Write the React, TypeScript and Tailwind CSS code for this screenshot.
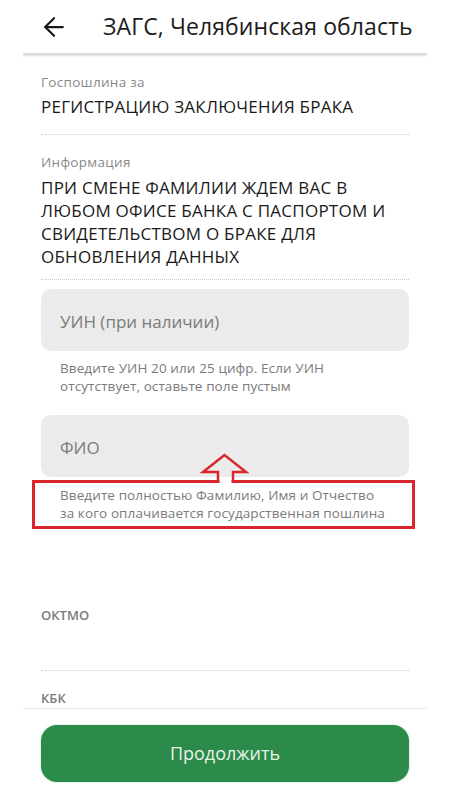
import { ArrowLeft } from "lucide-react";

const font = { fontFamily: '"Open Sans", "Noto Sans", sans-serif' };

function Label({ children }: { children: string }) {
  return <p className="text-[13.5px] leading-[18px] tracking-[0.3px] text-[#8a8a8a]">{children}</p>;
}

function Dotted({ className = "" }: { className?: string }) {
  return <div className={`border-t border-dotted border-[#c9c9c9] ${className}`} />;
}

function Field({ placeholder, className = "" }: { placeholder: string; className?: string }) {
  return (
    <div className={`h-[62px] rounded-[10px] bg-[#ebebeb] flex items-center pl-[19px] pt-[4px] ${className}`}>
      <span className="text-[17px] text-[#7b7b7b]">{placeholder}</span>
    </div>
  );
}

export default function App() {
  return (
    <div className="relative w-[450px] h-[800px] bg-white flex flex-col overflow-hidden" style={font}>
      <header className="h-[53px] flex items-center pl-[39px] shrink-0">
        <ArrowLeft size={30} strokeWidth={1.8} className="text-[#1a1a1a]" />
        <h1 className="ml-[34px] text-[23px] text-[#1c1c1c] tracking-[0.1px]">ЗАГС, Челябинская область</h1>
      </header>
      <div className="mx-[23px] h-[2px] bg-[#dcdcdc] shadow-[0_1px_2px_rgba(0,0,0,0.12)] shrink-0" />

      <main className="flex-1 overflow-hidden px-[41px] pt-[18px]">
        <Label>Госпошлина за</Label>
        <p className="mt-[4px] text-[17px] leading-[23px] tracking-[0.25px] text-[#1a1a1a] font-medium">
          РЕГИСТРАЦИЮ ЗАКЛЮЧЕНИЯ БРАКА
        </p>
        <Dotted className="mt-[16px]" />

        <div className="mt-[18px]">
          <Label>Информация</Label>
        </div>
        <p className="mt-[5px] text-[17px] leading-[23px] tracking-[0.25px] text-[#1a1a1a] font-medium whitespace-nowrap">
          ПРИ СМЕНЕ ФАМИЛИИ ЖДЕМ ВАС В
          <br />
          ЛЮБОМ ОФИСЕ БАНКА С ПАСПОРТОМ И
          <br />
          СВИДЕТЕЛЬСТВОМ О БРАКЕ ДЛЯ
          <br />
          ОБНОВЛЕНИЯ ДАННЫХ
        </p>
        <Dotted className="mt-[11px]" />

        <Field placeholder="УИН (при наличии)" className="mt-[9px]" />
        <p className="mt-[8px] pl-[19px] text-[13.5px] leading-[18px] tracking-[0.1px] text-[#7b7b7b] font-medium">
          Введите УИН 20 или 25 цифр. Если УИН
          <br />
          отсутствует, оставьте поле пустым
        </p>

        <Field placeholder="ФИО" className="mt-[20px]" />
        <div className="mt-[3px] -ml-[9px] -mr-[6px] border-[3px] border-[#d9252b] pl-[25px] pt-[3px] pb-[4px]">
          <p className="text-[13.5px] leading-[18px] tracking-[0.1px] text-[#7b7b7b] font-medium whitespace-nowrap">
            Введите полностью Фамилию, Имя и Отчество
            <br />
            за кого оплачивается государственная пошлина
          </p>
        </div>

        <p className="mt-[77px] text-[13px] leading-[18px] text-[#7a7a7a] font-semibold">ОКТМО</p>
        <Dotted className="mt-[46px]" />
        <p className="mt-[18px] text-[13px] leading-[18px] text-[#7a7a7a] font-semibold">КБК</p>
      </main>

      <footer className="mx-[23px] border-t border-[#ececec] pt-[16px] pb-[18px] shrink-0">
        <button className="mx-[18px] w-[368px] h-[57px] rounded-[16px] bg-[#2c8a4b] text-[18px] text-[#e6f4e7] shadow-[0_0_2px_rgba(60,180,90,0.5)]">
          Продолжить
        </button>
      </footer>

      <svg
        className="absolute left-0 top-0 pointer-events-none"
        width={450}
        height={800}
        viewBox="0 0 450 800"
      >
        <rect x={219.5} y={478} width={12} height={7} fill="#ffffff" />
        <path
          d="M218 482 V472 H203 L224.5 455 L246 472 H233 V482"
          fill="none"
          stroke="#d9252b"
          strokeWidth={2.5}
          strokeLinejoin="miter"
        />
      </svg>
    </div>
  );
}
